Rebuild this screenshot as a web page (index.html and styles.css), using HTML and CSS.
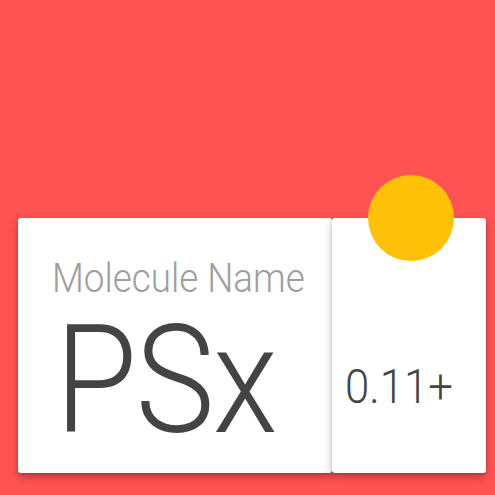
FILE: index.html
```html
<!DOCTYPE html>
<html>
<head>
<meta charset="utf-8">
<link rel="stylesheet" href="styles.css">
</head>
<body>
<div class="page">
  <div class="cards">
    <div class="card card-main">
      <div class="label">Molecule Name</div>
      <div class="symbol">PSx</div>
    </div>
    <div class="card card-side">
      <div class="fab"></div>
      <div class="value">0.11+</div>
    </div>
  </div>
</div>
</body>
</html>
```

FILE: styles.css
```css
html, body {
  margin: 0;
  padding: 0;
  background: #ff5252;
  font-family: Roboto, "Noto Sans", sans-serif;
  font-weight: 300;
}
.page {
  width: 495px;
  height: 495px;
  padding: 218px 9px 0 18px;
  box-sizing: border-box;
}
.cards {
  display: flex;
  height: 255px;
}
.card {
  background: #fff;
  border-radius: 3px;
  box-shadow: 0 4px 8px rgba(0, 0, 0, 0.28), 0 1px 2px rgba(0, 0, 0, 0.15);
  box-sizing: border-box;
}
.card-main {
  width: 314px;
  padding: 41px 0 0 34px;
}
.card-side {
  position: relative;
  flex: 1;
  padding: 145px 0 0 13px;
}
.label {
  font-size: 40px;
  line-height: 40px;
  color: #9e9e9e;
  white-space: nowrap;
  transform: scaleX(0.92);
  transform-origin: left center;
}
.symbol {
  margin-top: 27px;
  margin-left: 3px;
  font-size: 150px;
  line-height: 110px;
  color: #444;
  letter-spacing: -2px;
  transform: scaleX(0.89);
  transform-origin: left center;
}
.value {
  font-size: 48px;
  line-height: 48px;
  color: #444;
  transform: scaleX(0.91);
  transform-origin: left center;
}
.fab {
  position: absolute;
  left: 36px;
  top: -43px;
  width: 86px;
  height: 86px;
  border-radius: 50%;
  background: #ffc107;
}
```
